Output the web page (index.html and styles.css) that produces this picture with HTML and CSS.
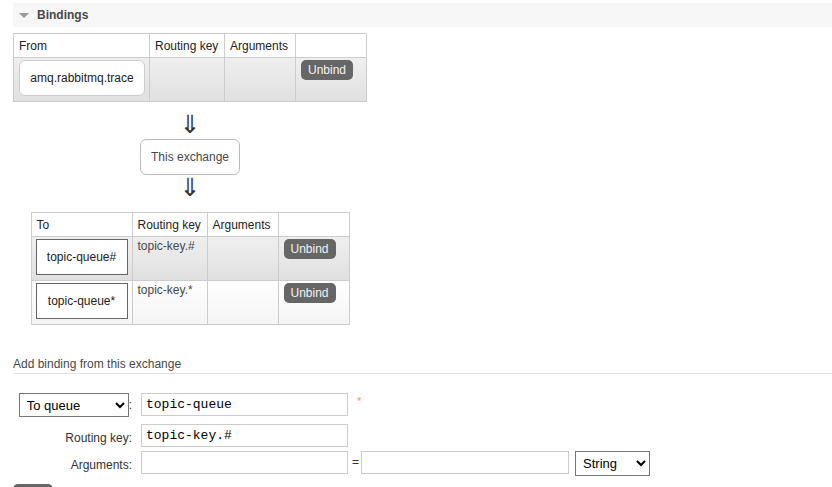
FILE: index.html
```html
<!DOCTYPE html>
<html>
<head>
<meta charset="utf-8">
<title>Bindings</title>
<link rel="stylesheet" href="styles.css">
</head>
<body>
<div class="page">
  <h2 class="section-head"><span class="tri"></span>Bindings</h2>
  <div class="bindings">
    <div class="grid grid-from">
      <div class="th">From</div>
      <div class="th">Routing key</div>
      <div class="th">Arguments</div>
      <div class="th"></div>
      <div class="td alt1 cell-from"><span class="ex-box">amq.rabbitmq.trace</span></div>
      <div class="td alt1"></div>
      <div class="td alt1"></div>
      <div class="td alt1"><button class="btn">Unbind</button></div>
    </div>
    <div class="arrow arrow-1">⇓</div>
    <div class="this-ex">This exchange</div>
    <div class="arrow arrow-2">⇓</div>
    <div class="grid grid-to">
      <div class="th">To</div>
      <div class="th">Routing key</div>
      <div class="th">Arguments</div>
      <div class="th"></div>
      <div class="td alt1 cell-to"><span class="q-box">topic-queue#</span></div>
      <div class="td alt1">topic-key.#</div>
      <div class="td alt1"></div>
      <div class="td alt1"><button class="btn">Unbind</button></div>
      <div class="td alt2 cell-to"><span class="q-box">topic-queue*</span></div>
      <div class="td alt2">topic-key.*</div>
      <div class="td alt2"></div>
      <div class="td alt2"><button class="btn">Unbind</button></div>
    </div>
  </div>
  <h3 class="sub">Add binding from this exchange</h3>
  <div class="form">
    <div class="frow frow-1">
      <div class="flabel"><select class="sel sel-dest"><option>To queue</option><option>To exchange</option></select>:</div>
      <input class="inp" type="text" value="topic-queue">
      <span class="mand">*</span>
    </div>
    <div class="frow frow-2">
      <div class="flabel lbl">Routing key:</div>
      <input class="inp" type="text" value="topic-key.#">
    </div>
    <div class="frow frow-3">
      <div class="flabel lbl">Arguments:</div>
      <input class="inp" type="text" value="">
      <span class="eq">=</span>
      <input class="inp inp-2" type="text" value="">
      <select class="sel sel-type"><option>String</option><option>Number</option><option>Boolean</option><option>List</option></select>
    </div>
    <button class="btn btn-bind" aria-label="Bind"></button>
  </div>
</div>
</body>
</html>
```

FILE: styles.css
```css
* { box-sizing: border-box; }
html, body { overflow: hidden; }
body {
  margin: 0;
  font: 12px "Liberation Sans", Arial, sans-serif;
  color: #484848;
  background: #fff;
}
.page {
  padding: 3px 0 0 13px;
}
.section-head {
  margin: 0;
  height: 24px;
  background: #f7f7f7;
  display: flex;
  align-items: center;
  padding-left: 6px;
  font-size: 12px;
  font-weight: bold;
  color: #484848;
}
.tri {
  width: 0;
  height: 0;
  border-left: 5.5px solid transparent;
  border-right: 5.5px solid transparent;
  border-top: 5px solid #999;
  margin-right: 8px;
}
.bindings {
  display: inline-flex;
  flex-direction: column;
  align-items: center;
  margin-top: 6px;
}
.grid {
  display: grid;
  gap: 1px;
  padding: 1px;
  background: #ccc;
}
.grid-from {
  grid-template-columns: 135px 74px 70px 70px;
  grid-template-rows: 23px 43px;
}
.grid-to {
  grid-template-columns: 100px 74px 70px 70px;
  grid-template-rows: 23px 43px 43px;
  margin-top: 14px;
}
.th {
  background: #fff;
  padding: 0 5px;
  display: flex;
  align-items: center;
  color: #222;
}
.td {
  padding: 2px 5px;
  line-height: 14px;
}
.alt1 { background: linear-gradient(#efefef, #e0e0e0); }
.alt2 { background: linear-gradient(#fff, #f4f4f4); }
.cell-from { padding-left: 5px; }
.cell-to { padding-left: 4px; }
.ex-box {
  display: flex;
  align-items: center;
  justify-content: center;
  width: 126px;
  height: 36px;
  border: 1px solid #ccc;
  border-radius: 6px;
  background: #fff;
  color: #222;
}
.q-box {
  display: flex;
  align-items: center;
  justify-content: center;
  width: 92px;
  height: 36px;
  border: 1px solid #666;
  background: #fff;
  color: #222;
}
.btn {
  display: block;
  height: 20px;
  padding: 0 7px;
  border: 0;
  border-radius: 5px;
  background: #666;
  color: #f2f2f2;
  font: 12px "Liberation Sans", Arial, sans-serif;
}
.arrow {
  height: 20px;
  font: 25px/20px "DejaVu Sans", sans-serif;
  color: #333;
}
.arrow-1 { margin-top: 13px; }
.arrow-2 { margin-top: 3px; }
.this-ex {
  margin-top: 4px;
  height: 36px;
  padding: 0 10px;
  border: 1px solid #bbb;
  border-radius: 6px;
  display: flex;
  align-items: center;
  color: #484848;
}
.sub {
  margin: 32px 0 0;
  padding-bottom: 2px;
  font-size: 12px;
  line-height: 14px;
  font-weight: normal;
  color: #484848;
  border-bottom: 1px solid #e2e2e2;
}
.form { padding-top: 19px; }
.frow {
  display: flex;
  align-items: flex-start;
}
.frow-2 { margin-top: 7px; }
.frow-3 { margin-top: 4px; }
.flabel {
  width: 119px;
  margin-right: 9px;
  display: flex;
  justify-content: flex-end;
  align-items: center;
  color: #333;
}
.lbl {
  height: 23px;
  padding-top: 4px;
}
.sel {
  font: 13px "Liberation Sans", Arial, sans-serif;
  color: #000;
  background: #fff;
  padding-left: 3px;
}
.sel-dest {
  width: 110px;
  height: 24px;
}
.sel-type {
  width: 75px;
  height: 25px;
  margin-left: 6px;
}
.inp {
  width: 207px;
  height: 23px;
  padding: 0 4px;
  border: 1px solid #ccc;
  font: 13px "Liberation Mono", monospace;
  color: #000;
  background: #fff;
}
.inp-2 { width: 208px; }
.mand {
  margin-left: 9px;
  color: #f88;
  font-size: 11px;
  line-height: 14px;
  padding-top: 1px;
}
.eq {
  margin: 0 2px 0 4px;
  line-height: 23px;
  color: #333;
}
.btn-bind {
  margin-top: 8px;
  width: 40px;
}
```
